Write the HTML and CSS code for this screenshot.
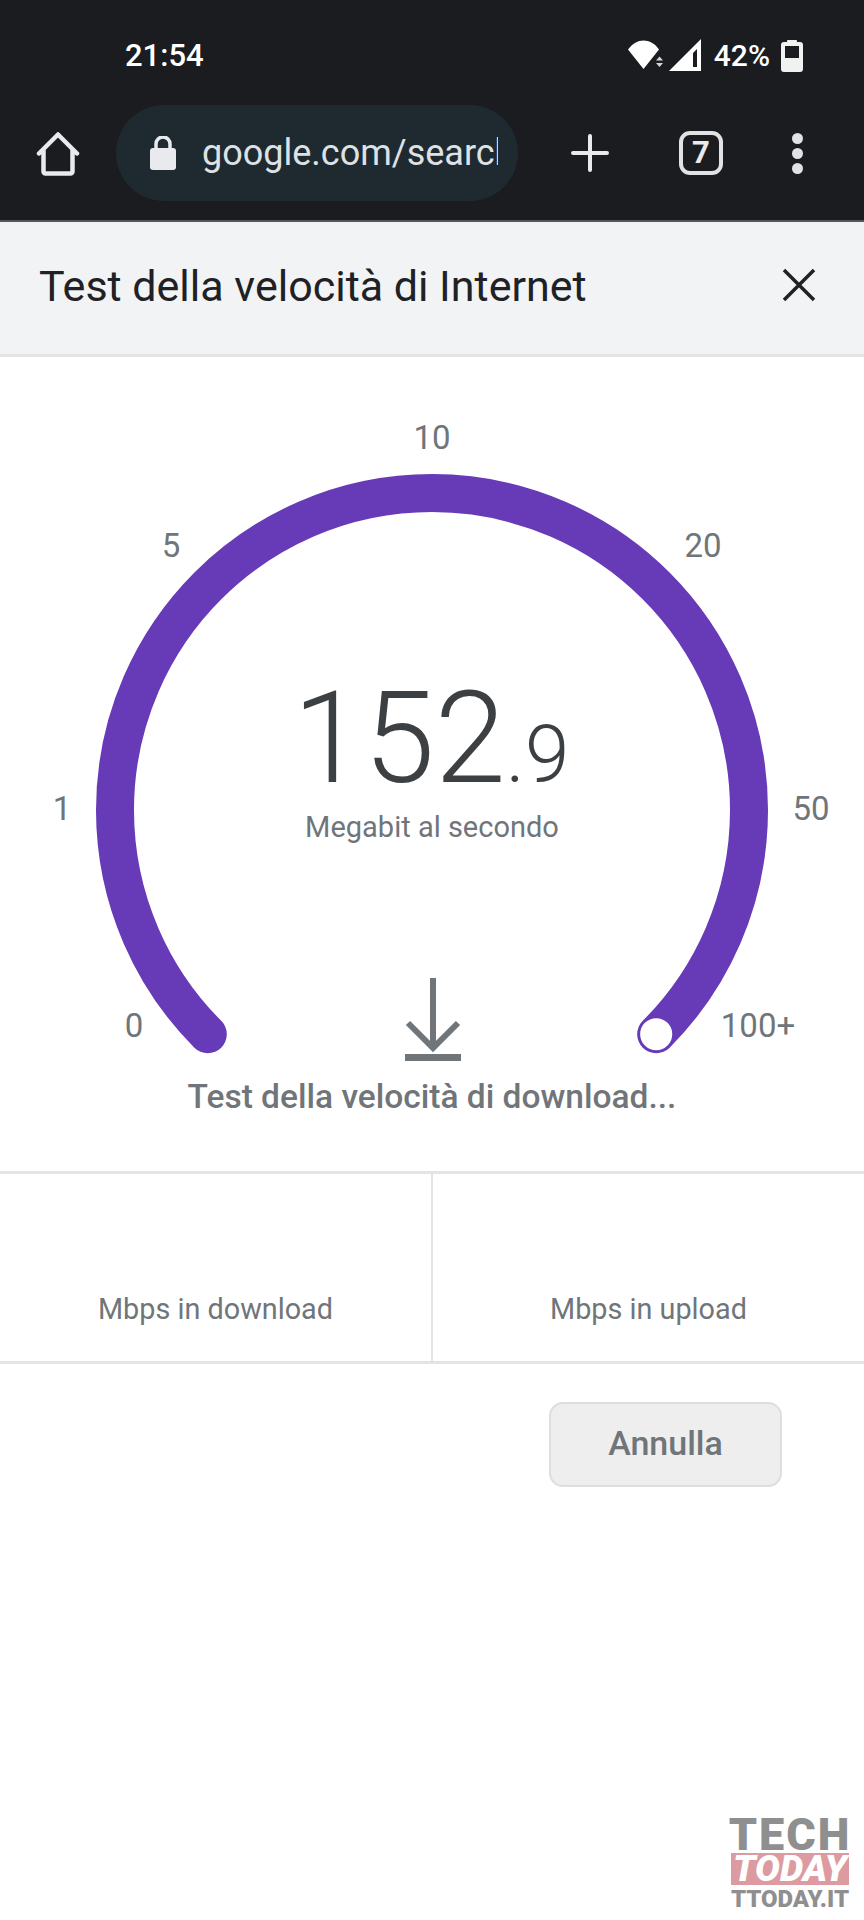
FILE: index.html
```html
<!DOCTYPE html>
<html lang="it">
<head>
<meta charset="utf-8">
<title>Test della velocità di Internet</title>
<link rel="stylesheet" href="styles.css">
</head>
<body>
<div class="page">
  <header class="chrome">
    <div class="status">
      <span class="time">21:54</span>
      <div class="status-right">
        <svg class="wifi" width="36" height="30" viewBox="0 0 36 30"><path d="M0 9.500C4.500 3.500 10 .5 15.500.5S27 3.500 31 9.500L15.500 29z" fill="#fff"/><path d="M31.500 16.500l3.500 4h-7zM28 23h7l-3.500 4z" fill="#d8d8d8"/></svg>
        <svg class="signal" width="32" height="32" viewBox="0 0 32 32"><path d="M32 0v32H0zM28 10L24 14V28H28z" fill="#fff" fill-rule="evenodd"/></svg>
        <span class="pct">42%</span>
        <svg class="battery" width="22" height="33" viewBox="0 0 22 33"><path d="M6 3V2a1 1 0 0 1 1-1h8a1 1 0 0 1 1 1v1h3a3 3 0 0 1 3 3v24a3 3 0 0 1-3 3H3a3 3 0 0 1-3-3V6a3 3 0 0 1 3-3zM4 7v12h14V7z" fill="#f1f1f1" fill-rule="evenodd"/></svg>
      </div>
    </div>
    <div class="toolbar">
      <svg class="home" width="44" height="44" viewBox="0 0 44 44"><path d="M3 21.500L22 2.500l19 19M7.500 18v21.500a2 2 0 0 0 2 2h25a2 2 0 0 0 2-2V18" fill="none" stroke="#e8eaed" stroke-width="4.500" stroke-linecap="round" stroke-linejoin="round"/></svg>
      <div class="omnibox">
        <svg class="lock" width="26" height="34" viewBox="0 0 26 34"><path d="M6 13V8a7 7 0 0 1 14 0v5" fill="none" stroke="#e8eaed" stroke-width="3.500"/><rect y="12" width="26" height="22" rx="3" fill="#e8eaed"/></svg>
        <span class="url">google.com/search</span>
      </div>
      <svg class="plus" width="38" height="38" viewBox="0 0 38 38"><path d="M19 2v34M2 19h34" stroke="#e8eaed" stroke-width="4" stroke-linecap="round"/></svg>
      <div class="tabs">7</div>
      <div class="dots"><i></i><i></i><i></i></div>
    </div>
  </header>

  <div class="titlebar">
    <span class="title">Test della velocità di Internet</span>
    <svg class="close" width="34" height="34" viewBox="0 0 34 34"><path d="M2 2l30 30M32 2L2 32" stroke="#202124" stroke-width="3.500"/></svg>
  </div>

  <main class="test">
    <svg class="gauge" width="864" height="714" viewBox="0 0 864 714">
      <path d="M207.800 677.200A317 317 0 1 1 656.200 677.200" fill="none" stroke="#673ab7" stroke-width="38" stroke-linecap="round"/>
      <circle cx="656.200" cy="677.200" r="16.800" fill="#fff" stroke="#673ab7" stroke-width="1.500"/>
      <text class="tick" x="432" y="92">10</text>
      <text class="tick" x="171" y="200">5</text>
      <text class="tick" x="703" y="200">20</text>
      <text class="tick" x="62" y="463">1</text>
      <text class="tick" x="811" y="463">50</text>
      <text class="tick" x="134" y="680">0</text>
      <text class="tick" x="758" y="680">100+</text>
      <text class="speed" x="431" y="425"><tspan class="speed-int">152</tspan><tspan class="speed-dec">.9</tspan></text>
      <text class="unit" x="432" y="480">Megabit al secondo</text>
      <path d="M433 621v70M408 666l25 25 25-25" fill="none" stroke="#70757a" stroke-width="6"/>
      <rect x="405" y="697" width="56" height="7" fill="#70757a"/>
    </svg>
    <p class="phase">Test della velocità di download...</p>
  </main>

  <section class="results">
    <div class="result"><span>Mbps in download</span></div>
    <div class="result"><span>Mbps in upload</span></div>
  </section>

  <div class="actions"><button class="cancel" type="button">Annulla</button></div>

  <div class="mark">
    <span class="mark-tech">TECH</span>
    <span class="mark-today">TODAY</span>
    <span class="mark-site">TTODAY.IT</span>
  </div>
</div>
</body>
</html>
```

FILE: styles.css
```css
* { box-sizing: border-box; }
html, body { margin: 0; padding: 0; background: #fff; }
body { font-family: Roboto, "Liberation Sans", sans-serif; }
.page { position: relative; width: 864px; height: 1920px; overflow: hidden; background: #fff; }

.chrome { height: 222px; background: #1a1c20; border-bottom: 2px solid #55575a; }
.status { height: 105px; padding: 38px 61px 0 125px; display: flex; justify-content: space-between; align-items: flex-start; color: #fff; }
.time { font-size: 31px; font-weight: 500; line-height: 36px; }
.status-right { display: flex; align-items: center; height: 34px; }
.wifi { margin-right: 5px; }
.pct { font-size: 30px; font-weight: 500; line-height: 34px; margin: 1px 11px 0 13px; }
.toolbar { height: 96px; display: flex; align-items: center; padding-left: 36px; }
.home { flex: none; margin-right: 36px; margin-top: 1px; }
.omnibox { flex: none; width: 402px; height: 96px; border-radius: 48px; background: #1f2a30; display: flex; align-items: center; padding: 0 20px 0 34px; overflow: hidden; }
.lock { flex: none; margin-right: 26px; }
.url { font-size: 36px; color: #dfe2e5; white-space: nowrap; overflow: hidden; line-height: 44px; }
.plus { flex: none; margin-left: 53px; }
.tabs { flex: none; margin-left: 70px; width: 44px; height: 44px; border: 4px solid #e0e2e4; border-radius: 11px; color: #e8eaed; font-size: 31px; font-weight: 700; line-height: 36px; text-align: center; }
.dots { flex: none; margin-left: 69px; display: flex; flex-direction: column; gap: 4px; }
.dots i { display: block; width: 11px; height: 11px; border-radius: 50%; background: #e0e2e4; }

.titlebar { height: 135px; background: #f1f3f5; border-bottom: 3px solid #e2e3e5; display: flex; align-items: center; justify-content: space-between; padding: 0 48px 4px 39px; }
.title { font-size: 43px; color: #202124; line-height: 48px; }
.close { margin-bottom: 2px; }

.test { height: 814px; display: flex; flex-direction: column; }
.gauge { display: block; flex: none; }
.tick { font-size: 33px; fill: #70757a; text-anchor: middle; }
.speed { text-anchor: middle; fill: #3c4043; font-weight: 300; }
.speed-int { font-size: 128px; }
.speed-dec { font-size: 80px; }
.unit { font-size: 29px; fill: #70757a; text-anchor: middle; }
.phase { margin: 8px 0 0; text-align: center; font-size: 33.500px; font-weight: 500; line-height: 36px; color: #70757a; }

.results { height: 193px; display: flex; border-top: 3px solid #e4e4e4; border-bottom: 3px solid #e4e4e4; }
.result { flex: 1; display: flex; align-items: flex-end; justify-content: center; padding-bottom: 35px; font-size: 28.800px; line-height: 34px; color: #70757a; }
.result + .result { border-left: 2px solid #e4e4e4; }

.actions { display: flex; justify-content: flex-end; padding: 38px 82px 0 0; }
.cancel { width: 233px; height: 85px; background: #eeeeee; border: 2px solid #dcdee0; border-radius: 14px; color: #70757a; font-family: inherit; font-size: 34px; font-weight: 500; padding: 0 0 4px; }

.mark { position: absolute; left: 731px; top: 1817px; width: 118px; display: flex; flex-direction: column; align-items: center; font-weight: 900; color: #8f8f8f; }
.mark-tech { font-size: 45px; line-height: 35px; letter-spacing: 2px; }
.mark-today { width: 118px; height: 32px; margin-top: 1px; background: #dc9ba0; color: #fff; font-style: italic; font-size: 37px; line-height: 32px; text-align: center; }
.mark-site { font-size: 24px; line-height: 22px; margin-top: 3px; }
```
